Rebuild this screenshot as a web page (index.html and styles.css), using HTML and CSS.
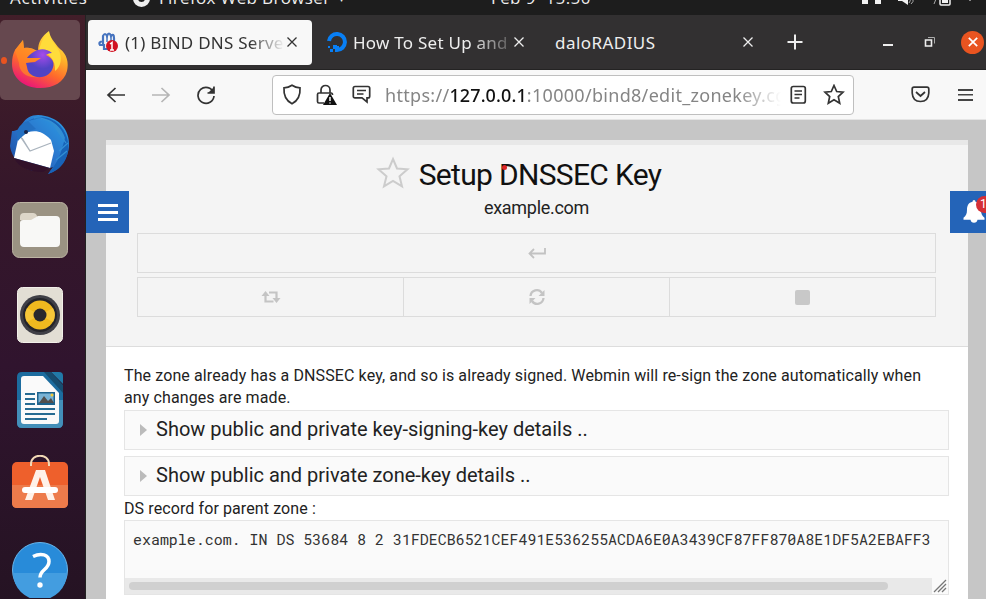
FILE: index.html
```html
<!DOCTYPE html>
<html lang="en">
<head>
<meta charset="utf-8">
<title>BIND DNS Server</title>
<link rel="stylesheet" href="styles.css">
</head>
<body>
<header class="topbar">
  <span class="activities">Activities</span>
  <span class="app"><i class="app-dot"></i>Firefox Web Browser<small>▾</small></span>
  <span class="clock">Feb 9&nbsp; 15:50</span>
  <svg class="tray" width="126" height="15" viewBox="0 0 126 15" fill="#f2f2f2"><path d="M1-2h6v6H1zM14-2h6v6h-6z"/><path d="M37-1h4l6-5V5l-6-4h-4z"/><path d="M49-2q1 3-1 5M52-2q1 4-2 6" fill="none" stroke="#aaa"/><path d="M73 4l2-5" stroke="#aaa"/><rect x="79" y="-5" width="10" height="10" rx="1" fill="none" stroke="#f2f2f2" stroke-width="1.5"/><path d="M81-2h6v5h-6zM107-1h4l-2 2z"/></svg>
</header>
<div class="desktop">
<nav class="dock">
  <div class="tile active"><i class="running"></i>
    <svg width="60" height="60" viewBox="0 0 60 60"><defs><linearGradient id="ff" x1=".8" y1="0" x2=".3" y2="1"><stop offset="0" stop-color="#fff04a"/><stop offset=".35" stop-color="#ffb52a"/><stop offset=".65" stop-color="#ff6a2b"/><stop offset="1" stop-color="#e9127c"/></linearGradient><radialGradient id="globe" cx=".6" cy=".2"><stop offset="0" stop-color="#a64bea"/><stop offset="1" stop-color="#5143c4"/></radialGradient></defs><path d="M5 20l8-10 1 8c5-1 8 0 14 3 0-9 4-15 11-20 1 7 5 10 9 16l2 2c7 5 9 14 7 22-3 11-13 17-27 17C14 58 2 48 2 34 2 28 3 24 5 20z" fill="url(#ff)"/><path d="M5 20l8-10 1 8c5-1 9 0 13 5l4 4-6 4-7 2c-1 8 5 13 12 14C17 49 9 42 9 33z" fill="#ff8a24" opacity=".7"/><path d="M29 20c2-8 5-14 10-18 1 8 5 11 9 17 5 8 3 18-3 22 1-11-6-18-16-21z" fill="#ffdc3b"/><path d="M17 28c5-7 16-13 25-5-3 0-5 1-6 2 8 4 9 9 6 15-6 11-24 9-25-3l-1-4 9-1 6-4z" fill="url(#globe)"/></svg></div>
  <div class="tile"><svg width="62" height="62" viewBox="0 0 62 62"><defs><linearGradient id="tb" x1="0" x2="1" y1="1" y2="0"><stop offset="0" stop-color="#17469c"/><stop offset=".5" stop-color="#2b75cc"/><stop offset="1" stop-color="#2ba0e6"/></linearGradient></defs><path d="M3 17c5 0 8-2 10-7C17 4 22 1 29 1c20 1 32 14 31 31-1 13-9 24-21 28l5-7-9 3C18 61 3 47 1 32z" fill="url(#tb)"/><path d="M10 21l9-3c8-2 15-1 23 8l3 11-4 17L5 44z" fill="#fff"/><path d="M11 22l10 15 21-8M21 37l-8-13" fill="none" stroke="#a9b3bd" stroke-width="1.300"/><path d="M5 44l36 10-7 4C21 58 10 54 5 44z" fill="#31112a"/><path d="M18 8c17-9 34 2 38 16-4 14-5 22-17 36 17-5 22-21 20-32C56 9 36-4 18 8z" fill="#1863b8"/><path d="M25 4c14-1 24 8 28 19M34 5c10 2 17 9 21 19M43 9l14 20M50 37l9-8M47 46l11-9" fill="none" stroke="#328fd4" stroke-width="1.300"/><path d="M9 27c-3-9 0-17 10-20l8 8c-7 2-12 5-18 12z" fill="#2370c2"/><circle cx="17" cy="18" r="2" fill="#17264c"/></svg></div>
  <div class="tile"><svg width="56" height="56" viewBox="0 0 56 56"><rect x=".5" y=".5" width="55" height="55" rx="7" fill="#9b9383" stroke="#bdb5a4"/><path d="M8 15q0-4 4-4h9q3 0 4 3l2 4H8z" fill="#ddd6c8"/><path d="M8 21q0-3 3-3h8l7-4h18q4 0 4 4v23q0 4-4 4H12q-4 0-4-4z" fill="#f8f8f6"/></svg></div>
  <div class="tile"><svg width="46" height="56" viewBox="0 0 46 56"><rect x=".5" y=".5" width="45" height="55" rx="5" fill="#e2ded4" stroke="#f2efe9"/><circle cx="23" cy="28" r="20" fill="#404047"/><circle cx="23" cy="28" r="17" fill="#24242a"/><circle cx="23" cy="28" r="14.5" fill="#efb91f"/><path d="M10 35a14.500 14.500 0 0 1 0-14l13 7zM36 21a14.500 14.500 0 0 1 0 14l-13-7z" fill="#f6c739"/><circle cx="23" cy="28" r="6.500" fill="#29292d"/></svg></div>
  <div class="tile"><svg width="46" height="56" viewBox="0 0 46 56"><path d="M5 0h23l18 18v33q0 5-5 5H5q-5 0-5-5V5q0-5 5-5z" fill="#1c6c9f"/><path d="M0 28h46v23q0 5-5 5H5q-5 0-5-5z" fill="#438fb9"/><path d="M7 4h19l16 17v28q0 3-3 3H7q-3 0-3-3V7q0-3 3-3z" fill="#fafafa"/><path d="M34 0h8q4 0 4 4v8z" fill="#217aa8"/><path d="M27 0h7l12 13v8z" fill="#164d70"/><path d="M8 22h10M8 27h10M8 32h10M8 37h30M8 42h30M8 47h22" stroke="#266b92" stroke-width="2"/><path d="M20 20h18v13H20z" fill="#1d628c"/><path d="M21.500 21.500h15v9h-15z" fill="#79b3d5"/><path d="M22 31l5-7 4 5 3-3 3 5z" fill="#514f4d"/><circle cx="35" cy="23" r="1.500" fill="#f3cb36"/></svg></div>
  <div class="tile"><svg width="56" height="60" viewBox="0 0 56 60"><rect y="7" width="56" height="46" rx="5" fill="#ee602c"/><path d="M0 30h56v18q0 5-5 5H5q-5 0-5-5z" fill="#ed7b4b"/><path d="M19 11V9c0-11 18-11 18 0v2" fill="none" stroke="#f2d9b6" stroke-width="2"/><path d="M24 15h9l10 30h-7l-8-23-8 23h-7z" fill="#fff1e8"/><rect x="10" y="32" width="36" height="6" rx="3" fill="#fff"/></svg></div>
  <div class="tile"><svg width="56" height="56" viewBox="0 0 56 56"><circle cx="28" cy="28" r="27.500" fill="#288bd9" stroke="#68b5eb"/><path d="M1 31h54a27 27 0 0 1-54 0z" fill="#439de0"/><path d="M21 14.500c8-4 16-2 16 5 0 8-9 8-9 16" fill="none" stroke="#fff" stroke-width="3.500"/><circle cx="28" cy="43" r="2.700" fill="#fff"/></svg></div>
</nav>
<main class="browser">
  <div class="tabs">
    <div class="tab selected">
      <svg class="fav" width="21" height="21" viewBox="0 0 21 21"><path d="M5 12V4q2-4 4 0 2-5 4 0 3-3 3 2v7M5 9q-5 1-3 4h4v4h4" fill="none" stroke="#4774bf" stroke-width="2.200"/><path d="M9 3v7M13 4v6" stroke="#4774bf" stroke-width="1.500"/><circle cx="14" cy="14" r="6" fill="#d11222"/><path d="M12 12l2-1.500V18m-2 0h4" fill="none" stroke="#fff" stroke-width="1.500"/></svg>
      <span class="label l1">(1) BIND DNS Server</span><svg class="x" viewBox="0 0 10 10"><path d="M.5.5l9 9m0-9l-9 9"/></svg>
    </div>
    <div class="tab second">
      <svg class="fav" width="20" height="21" viewBox="0 0 20 21"><path d="M2 9A8 8 0 1 1 10 18v-4" fill="none" stroke="#087ff5" stroke-width="4"/><path d="M6 13h4v4H6zM3 17h3v3H3zM1 14h2v2H1z" fill="#087ff5"/></svg>
      <span class="label l2">How To Set Up and</span><svg class="x" viewBox="0 0 10 10"><path d="M.5.5l9 9m0-9l-9 9"/></svg>
    </div>
    <div class="tab third"><span class="label l3">daloRADIUS</span><svg class="x" viewBox="0 0 10 10"><path d="M.5.5l9 9m0-9l-9 9"/></svg></div>
    <svg class="plus" width="16" height="16" viewBox="0 0 16 16"><path d="M8 0.500v15M.5 8h15"/></svg>
    <div class="controls"><i class="min"></i><svg width="12" height="12" viewBox="0 0 12 12"><path d="M1.500 4h6v6h-6z" stroke="#eee" stroke-width="1.600" fill="none"/><path d="M4 1.500h6.500v6" stroke="#aaa" fill="none"/></svg><b class="close"><svg width="10" height="10" viewBox="0 0 10 10"><path d="M.8.8l8.400 8.400m0-8.400L.8 9.200" stroke="#fff" stroke-width="1.700"/></svg></b></div>
  </div>
  <div class="toolbar">
    <svg class="nav" width="20" height="20" viewBox="0 0 20 20"><path d="M19 10H2m7.500-7L2 10l7.500 7"/></svg>
    <svg class="nav off" width="20" height="20" viewBox="0 0 20 20"><path d="M1 10h17m-7.500-7l7.500 7-7.500 7"/></svg>
    <svg class="nav" width="20" height="20" viewBox="0 0 20 20"><path d="M17.500 7.500A8 8 0 1 0 18 11M18 1.500v6.500h-6.500"/><path d="M18 2v6h-6z" fill="#333" stroke="none"/></svg>
    <div class="url">
      <svg width="20" height="21" viewBox="0 0 20 21"><path d="M10 1.200c2.700 1.900 5.300 2.600 8 2.600.5 7-1.400 12.600-8 16-6.600-3.400-8.500-9-8-16 2.700 0 5.300-.7 8-2.600z"/></svg>
      <svg class="lock" width="21" height="22" viewBox="0 0 21 22"><path d="M5 9V6c0-6 9-6 9 0v3M8 19H3q-1.500 0-1.500-1.500v-7Q1.500 9 3 9h12q1.500 0 1.500 2"/><path d="M14 9l7 12H7z" fill="#111" stroke="none"/><path d="M14 13v4m0 1.500v1" stroke="#fff" stroke-width="1.500"/></svg>
      <svg class="note" width="19" height="19" viewBox="0 0 19 19"><path d="M3 1.500h13q1.700 0 1.700 1.700v8q0 1.700-1.700 1.700h-1v4l-5-4H3q-1.700 0-1.700-1.700v-8Q1.300 1.500 3 1.500zM5 5.500h9M5 9h6.500"/></svg>
      <span class="address">https://<b>127.0.0.1</b>:10000/bind8/<span>edit_zonekey.cgi</span></span>
      <svg width="17" height="20" viewBox="0 0 17 20"><rect x="1.300" y="1.500" width="14" height="16.500" rx="2"/><path d="M4.500 6h7.500M4.500 9.500h7.500M4.500 13h5"/></svg>
      <svg class="bookmark" width="22" height="21" viewBox="0 0 22 21"><path d="M11 1.500l2.700 6 6.300.7-4.700 4.300 1.400 6.700-5.700-3.400-5.700 3.400 1.400-6.700L2 8.200l6.300-.7z"/></svg>
    </div>
    <svg class="pocket" width="19" height="17" viewBox="0 0 19 17"><path d="M3 1.200h13q1.800 0 1.800 1.800v4q-.5 8.500-8.300 8.500T1.200 7V3Q1.200 1.200 3 1.200zM5 6l4.500 4L14 6"/></svg>
    <i class="menu"></i>
  </div>
  <div class="viewport">
    <button class="float left" aria-label="Menu"><i></i><i></i><i></i></button>
    <div class="float right"><svg width="22" height="25" viewBox="0 0 22 25"><path d="M11 1q1.500 0 1.500 1.700c4 .8 5.500 4 5.500 8 0 4 1 6 3.500 8v2h-7q-.5 3-3.500 3t-3.500-3h-7v-2c2.500-2 3.500-4 3.500-8 0-4 1.500-7.200 5.500-8Q9.500 1 11 1z" fill="#fff"/></svg><b>1</b></div>
    <article class="sheet">
      <header class="head">
        <div class="title"><svg width="34" height="33" viewBox="0 0 34 33"><path d="M17 3l4 9.500 10.500.8-8 7 2.500 10-9-5.500-9 5.500 2.500-10-8-7L13 12.500z"/></svg><h1>Setup DNSSEC Key<i></i></h1></div>
        <p class="sub">example.com</p>
        <div class="row"><span><svg width="18" height="12" viewBox="0 0 18 12"><path d="M17 1v5.500H2M6 2L1.500 6.500 6 11" fill="none" stroke="#c2c2c2" stroke-width="1.800"/></svg></span></div>
        <div class="row"><span><svg width="20" height="14" viewBox="0 0 20 14" fill="none" stroke="#c4c4c4" stroke-width="2.200"><path d="M4.500 4v7.500h8M8 2.500h7.500v6"/><path d="M.5 6l4-5 4 5zM11.500 8h8l-4 5z" fill="#c4c4c4" stroke="none"/></svg></span><span><svg width="16" height="16" viewBox="0 0 16 16"><path d="M1.500 7A6.300 6.300 0 0 1 13 4M14.500 9A6.300 6.300 0 0 1 3 12" fill="none" stroke="#c4c4c4" stroke-width="2.300"/><path d="M15.500 1v6h-6zM.5 15V9h6z" fill="#c4c4c4"/></svg></span><span><i class="stop"></i></span></div>
      </header>
      <section class="body">
        <p class="intro">The zone already has a DNSSEC key, and so is already signed. Webmin will re-sign the zone automatically when<br>any changes are made.</p>
        <div class="details"><i></i><span class="d1">Show public and private key-signing-key details ..</span></div>
        <div class="details"><i></i><span class="d2">Show public and private zone-key details ..</span></div>
        <p class="ds">DS record for parent zone :</p>
        <div class="record"><code>example.com. IN DS 53684 8 2 31FDECB6521CEF491E536255ACDA6E0A3439CF87FF870A8E1DF5A2EBAFF3</code><div class="scroll"><i></i><svg width="16" height="16" viewBox="0 0 16 16"><path d="M2 14L14 2M6 14l8-8M10 14l4-4" stroke="#777" stroke-width="1.300"/></svg></div></div>
      </section>
    </article>
  </div>
</main>
</div>
</body>
</html>
```

FILE: styles.css
```css
* { box-sizing: border-box; }
body { margin: 0; width: 986px; height: 599px; overflow: hidden; font-family: Roboto, sans-serif; color: #222; }
svg { display: block; flex: none; }
h1, p { margin: 0; font-weight: 400; }

.topbar { height: 15px; background: #1d1d1d; color: #eee; position: relative; overflow: hidden; font: 17px/22px "Open Sans", sans-serif; white-space: nowrap; }
.topbar > * { position: absolute; top: -13px; }
.activities { left: 10px; letter-spacing: .75px; }
.app { left: 133px; display: flex; gap: 9px; letter-spacing: .35px; }
.app-dot { width: 17px; height: 17px; border: 5px solid #eee; border-radius: 50%; margin-top: 3px; }
.app small { font-size: 10px; }
.clock { left: 491px; letter-spacing: .4px; }
.topbar .tray { left: 861px; top: 0; }

.desktop { display: flex; height: 584px; }
.dock { width: 85px; height: 584px; padding-top: 2.500px; background: linear-gradient(#421e29, #35172a 30%, #30142e 60%, #251323); overflow: hidden; flex: none; }
.tile { width: 80px; height: 80px; margin: 2.500px 0 5px; display: grid; place-items: center; border-radius: 5px; position: relative; }
.tile.active { background: #66484f; }
.running { position: absolute; left: 1px; top: 37px; width: 6px; height: 7px; border-radius: 50%; background: #e95420; }

.browser { flex: 1; min-width: 0; border-left: 1px solid #222; display: flex; flex-direction: column; }
.tabs { height: 55px; flex: none; background: #323031; border-bottom: 1px solid #242323; display: flex; align-items: center; color: #eee; font-family: "Noto Sans", sans-serif; font-size: 17px; padding-left: 2px; }
.tab { height: 45px; display: flex; align-items: center; white-space: nowrap; }
.tab.selected { width: 224px; padding-left: 10px; background: #f8f8f8; color: #333; border-radius: 4px; }
.second { width: 217px; padding-left: 15px; }
.third { width: 222px; padding-left: 26px; }
.fav { margin-right: 6px; }
.label { overflow: hidden; flex: none; }
.l1 { width: 160px; letter-spacing: .25px; -webkit-mask-image: linear-gradient(90deg, #000 78%, transparent); mask-image: linear-gradient(90deg, #000 78%, transparent); }
.l2 { width: 157px; letter-spacing: .25px; -webkit-mask-image: linear-gradient(90deg, #000 75%, rgba(0,0,0,.2)); mask-image: linear-gradient(90deg, #000 75%, rgba(0,0,0,.2)); }
.l3 { width: 188px; letter-spacing: .45px; }
.x { width: 10px; height: 10px; stroke: currentColor; stroke-width: 1.300; }
.l1 + .x { margin-left: 2px; }
.l2 + .x { margin-left: 4px; }
.plus { stroke: #eee; stroke-width: 2; margin-left: 36px; }
.controls { display: flex; align-items: center; margin-left: auto; }
.min { width: 10px; height: 2px; background: #eee; margin: 5px 31px 0 0; }
.close { width: 23px; height: 23px; border-radius: 50%; background: #e95420; margin: 0 2px 0 25px; display: grid; place-items: center; }

.toolbar { height: 50px; flex: none; background: #f8f8f8; border-bottom: 1px solid #e5e5e5; display: flex; align-items: center; padding-left: 20px; }
.toolbar svg { fill: none; stroke: #333; stroke-width: 1.700; }
.nav { margin-right: 25px; }
.toolbar .off { stroke: #b5b5b5; }
.url { width: 582px; height: 40px; border: 1px solid #bfbfbf; border-radius: 4px; background: #fff; display: flex; align-items: center; padding-left: 9px; margin-left: 31px; }
.lock { margin-left: 14px; }
.note { margin-left: 15px; }
.address { width: 397px; margin: 0 9px 0 13px; overflow: hidden; white-space: nowrap; font-family: "Noto Sans", sans-serif; font-size: 18px; letter-spacing: .3px; color: #858585; -webkit-mask-image: linear-gradient(90deg, #000 89%, transparent); mask-image: linear-gradient(90deg, #000 89%, transparent); }
.address b { font-weight: 500; color: #111; letter-spacing: .1px; }
.address:not(b) { text-indent: 1px; }
.bookmark { margin-left: 16px; }
.pocket { margin-left: 57px; }
.menu { width: 15px; height: 12px; margin-left: 28px; border-top: 2px solid #444; border-bottom: 2px solid #444; background: linear-gradient(#444, #444) center / 100% 1.500px no-repeat; }

.viewport { flex: 1; background: #c6c6c6; padding: 20px 18px 0 20px; position: relative; min-height: 0; overflow: hidden; }
.float { position: absolute; top: 71px; height: 42px; background: #2464b8; border: 0; padding: 0; }
.left { left: 0; width: 43px; display: flex; flex-direction: column; align-items: center; justify-content: center; gap: 4px; }
.left i { width: 20px; height: 3px; background: #fff; }
.right { right: 0; width: 36px; padding: 8px 0 0 13px; overflow: hidden; }
.right b { position: absolute; left: 26px; top: 5px; width: 17px; height: 17px; border-radius: 50%; background: #d52f35; color: #fff; font: 12px/17px Roboto, sans-serif; padding-left: 4px; }
.sheet { height: 480px; background: #fff; }
.head { height: 207px; background: #f4f4f4; border-top: 5px solid #e8e8e8; border-bottom: 1px solid #ddd; padding: 0 32px 0 31px; }
.title { height: 52px; display: flex; justify-content: center; align-items: center; padding: 8px 0 0 0; margin-left: -36px; gap: 9px; }
.title svg { fill: none; stroke: #ccc; stroke-width: 2; margin-top: -5px; }
h1 { font-size: 30px; line-height: 40px; letter-spacing: -.68px; color: #111; position: relative; white-space: nowrap; }
h1 i { position: absolute; left: 83px; top: 10px; width: 5px; height: 5px; border-radius: 50%; background: #dc2525; }
.sub { text-align: center; font-size: 18px; line-height: 22px; letter-spacing: -.28px; color: #222; margin-bottom: 14px; }
.row { height: 40px; border: 1px solid #dcdcdc; display: flex; margin-bottom: 4px; }
.row span { flex: 1; display: grid; place-items: center; border-left: 1px solid #dcdcdc; }
.row span:first-child { border-left: 0; }
.stop { width: 15px; height: 15px; border-radius: 2px; background: #c8c8c8; }
.body { padding: 18px 19px 0 18px; }
.intro { font-size: 16px; line-height: 22px; letter-spacing: .105px; white-space: nowrap; margin-bottom: 1px; }
.details { height: 40px; border: 1px solid #e5e5e5; background: #fafafa; display: flex; align-items: center; font-size: 20px; margin-bottom: 6px; padding: 0 0 2px 15px; }
.details i { border-left: 7px solid #bbb; border-top: 6px solid transparent; border-bottom: 6px solid transparent; margin: 2px 9px 0 0; }
.ds { font-size: 16px; line-height: 22px; letter-spacing: .1px; margin: -4px 0 0; }
.record { height: 75px; border: 1px solid #e5e5e5; background: #fafafa; display: flex; flex-direction: column; justify-content: space-between; }
code { font: 14.950px/22px "Roboto Mono", "DejaVu Sans Mono", monospace; color: #333; padding: 7px 0 0 8px; white-space: nowrap; }
.scroll { height: 16px; background: #e9e9e9; display: flex; align-items: center; justify-content: space-between; }
.scroll i { width: 759px; height: 8px; border-radius: 4px; background: #d0d0d0; margin-left: 4px; }
.scroll svg { background: #fafafa; }
```
